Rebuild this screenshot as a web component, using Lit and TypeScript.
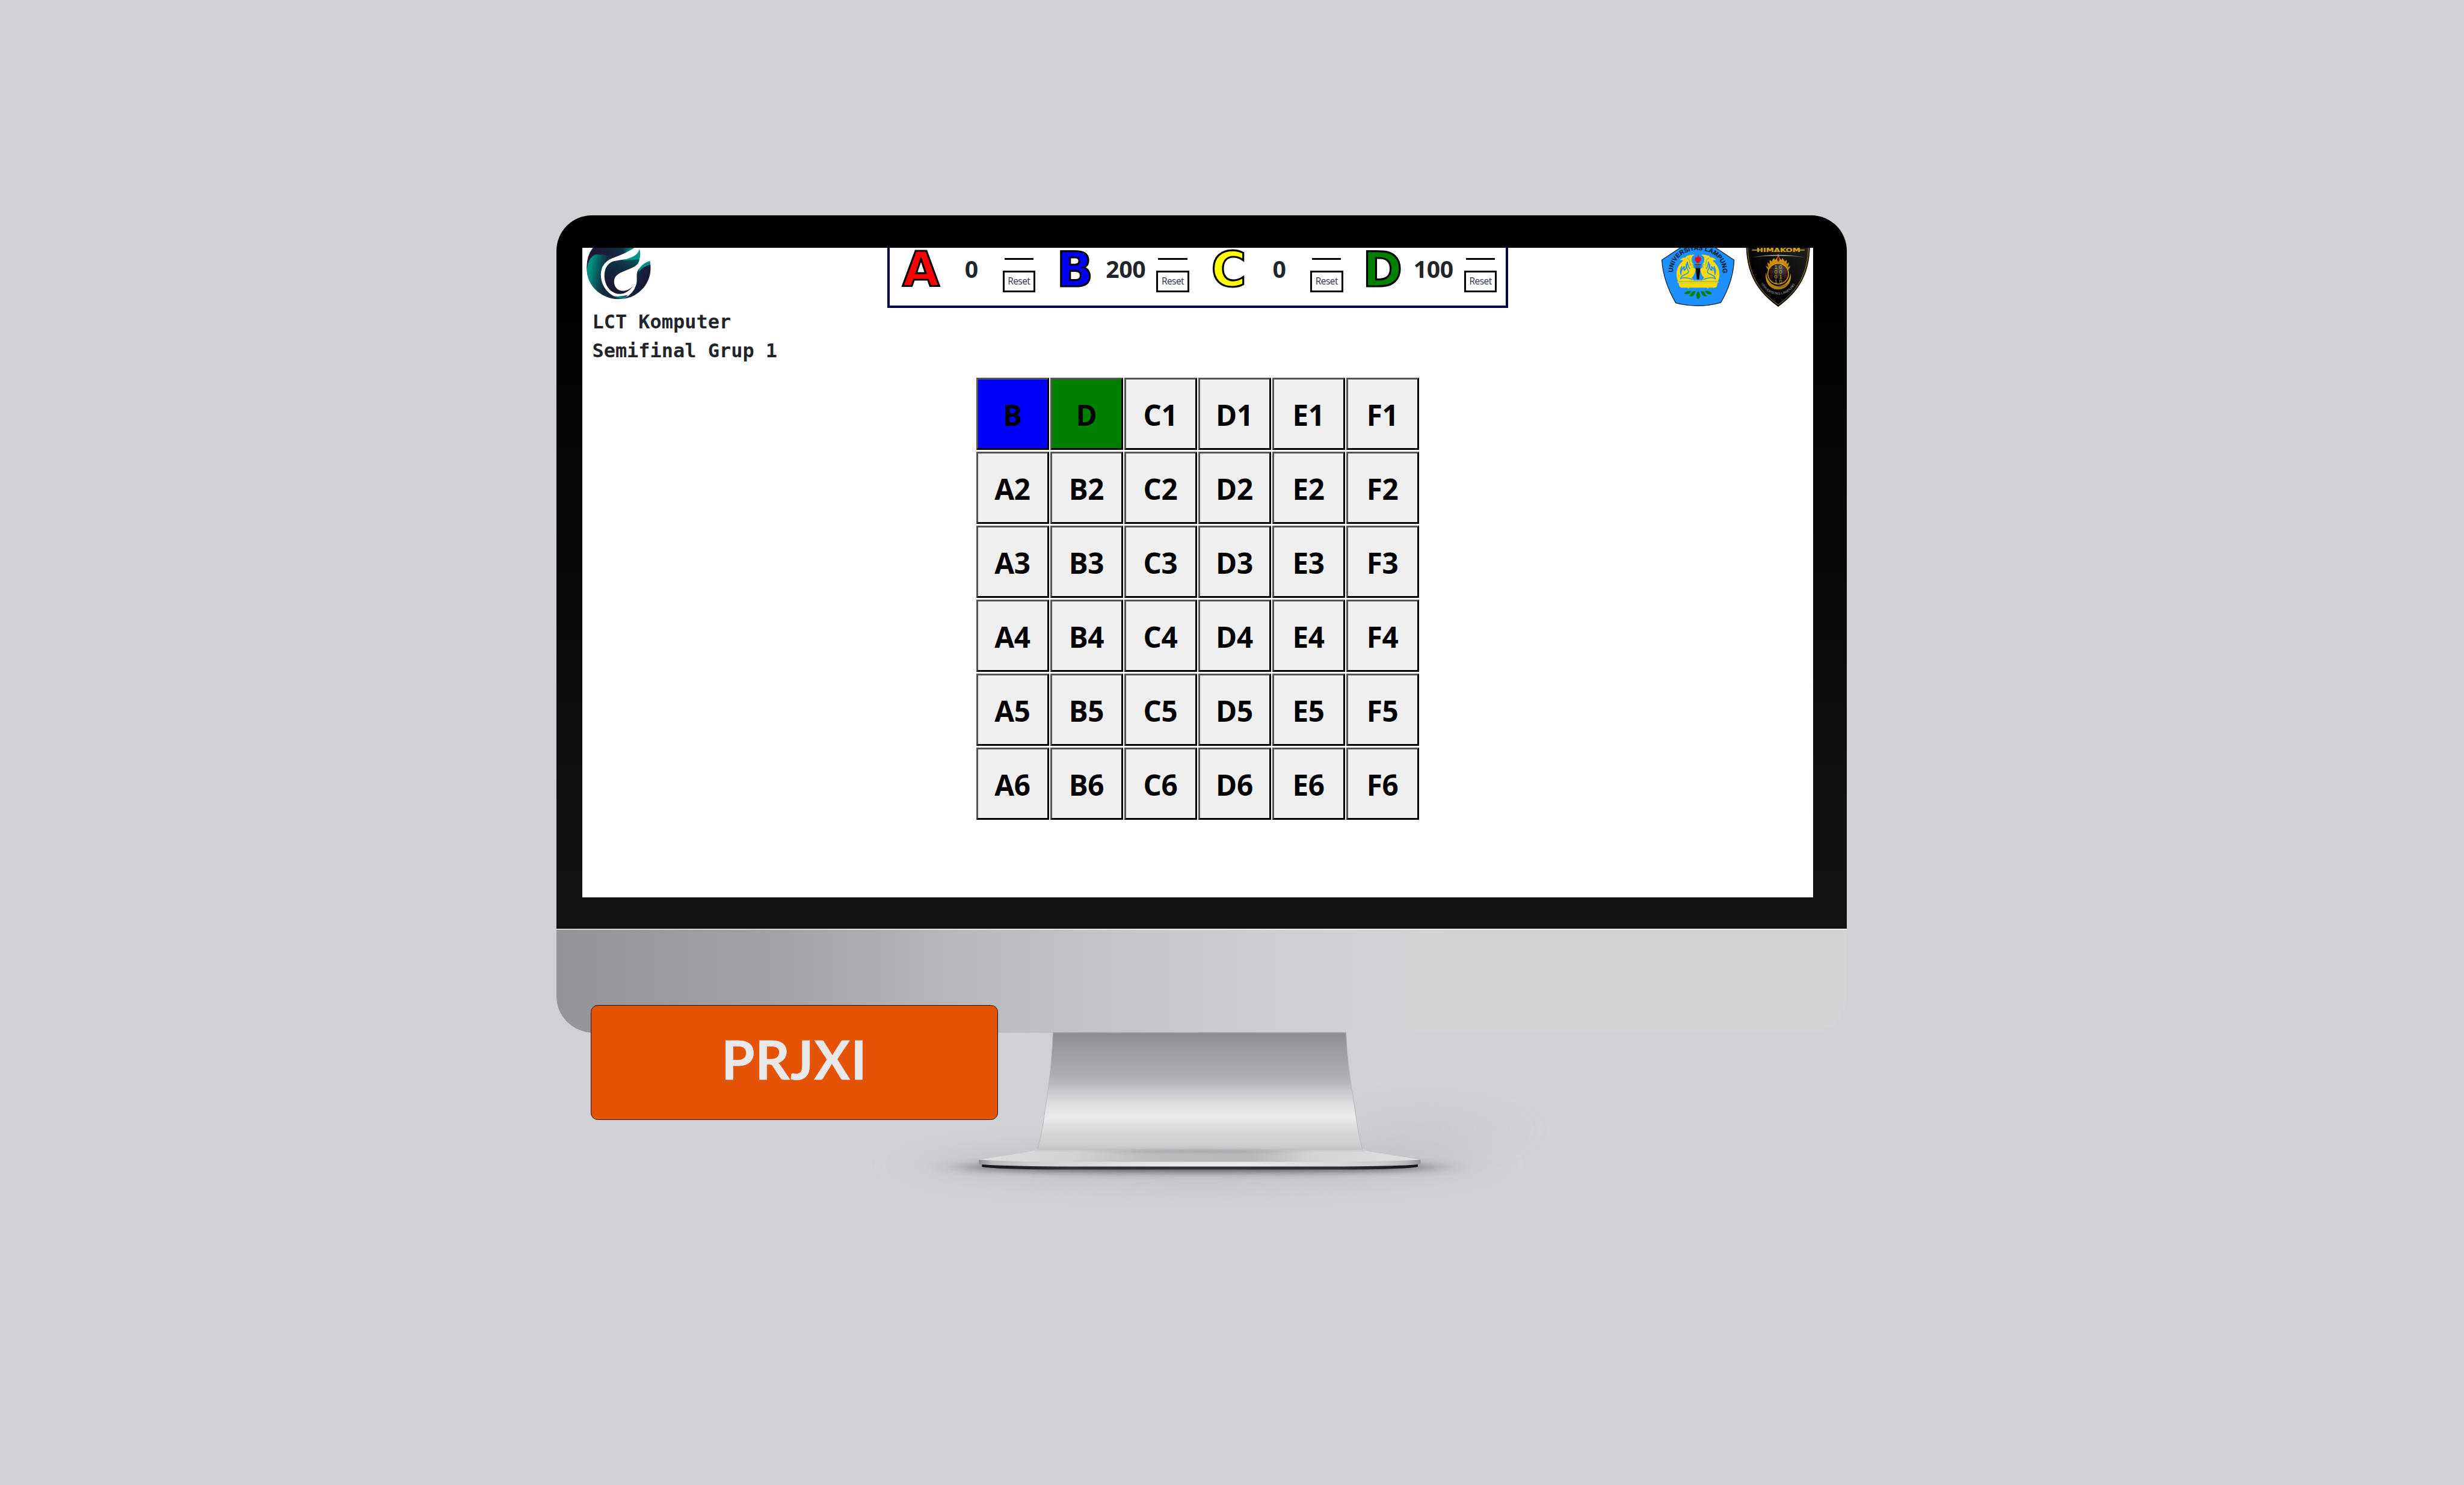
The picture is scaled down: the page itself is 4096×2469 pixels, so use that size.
import { LitElement, html, css, svg, unsafeCSS } from "lit";
import { customElement } from "lit/decorators.js";

/** Converts a design unit (6370-wide artboard) to CSS pixels of the 4096-wide stage. */
const u = (n: number) => unsafeCSS(`${(n * 0.643014).toFixed(3)}px`);

interface Team {
  name: string;
  score: number;
  tone: string;
}

const TEAMS: Team[] = [
  { name: "A", score: 0, tone: "red" },
  { name: "B", score: 200, tone: "blue" },
  { name: "C", score: 0, tone: "yellow" },
  { name: "D", score: 100, tone: "green" },
];

const CLAIMED: Record<string, { label: string; tone: string }> = {
  A1: { label: "B", tone: "blue" },
  B1: { label: "D", tone: "green" },
};

const COLUMNS = ["A", "B", "C", "D", "E", "F"];
const ROWS = [1, 2, 3, 4, 5, 6];

@customElement("lct-logo")
class LctLogo extends LitElement {
  static styles = css`
    :host { display: block; }
    svg { display: block; width: ${u(186.67)}; height: ${u(136.67)}; }
  `;
  render() {
    return html`<svg viewBox="18 31.5 560 410">
      <defs>
        <linearGradient id="a" gradientUnits="userSpaceOnUse" x1="55" y1="0" x2="235" y2="30">
          <stop offset="0" stop-color="#009682" /><stop offset=".32" stop-color="#009080" />
          <stop offset=".7" stop-color="#0a5058" /><stop offset="1" stop-color="#10293f" />
        </linearGradient>
        <linearGradient id="b" gradientUnits="userSpaceOnUse" x1="60" y1="70" x2="400" y2="50">
          <stop offset="0" stop-color="#1e1730" /><stop offset=".45" stop-color="#18203a" />
          <stop offset=".8" stop-color="#122f45" /><stop offset="1" stop-color="#0b8073" />
        </linearGradient>
        <linearGradient id="c" gradientUnits="userSpaceOnUse" x1="420" y1="120" x2="300" y2="380">
          <stop offset="0" stop-color="#0a4f55" /><stop offset=".3" stop-color="#112f45" />
          <stop offset=".6" stop-color="#12243c" /><stop offset="1" stop-color="#1a1830" />
        </linearGradient>
        <linearGradient id="d" gradientUnits="userSpaceOnUse" x1="440" y1="210" x2="540" y2="250">
          <stop offset="0" stop-color="#112d44" /><stop offset=".5" stop-color="#161f38" />
          <stop offset="1" stop-color="#1e1730" />
        </linearGradient>
        <linearGradient id="e" gradientUnits="userSpaceOnUse" x1="260" y1="0" x2="400" y2="0">
          <stop offset="0" stop-color="#0b5f62" /><stop offset=".3" stop-color="#009080" />
          <stop offset="1" stop-color="#10293f" />
        </linearGradient>
      </defs>
      <path fill="url(#b)" d="M105 25 Q50 90 52 190 Q52 215 60 250 L180 170 Q200 130 260 108 Q360 75 428 25Z" />
      <path fill="#08897a" d="M428 25 Q400 52 345 62 Q380 45 400 25Z" />
      <path fill="url(#a)" d="M55 195 Q62 108 120 84 Q180 76 262 107 Q200 130 176 175 C152 230 160 290 190 340 Q220 388 270 410 Q300 424 345 425 Q260 440 190 405 C100 360 50 280 55 195Z" />
      <path fill="url(#c)" d="M460 112 Q464 152 425 176 C370 205 310 218 280 250 C255 282 262 325 288 350 C320 378 375 368 414 324 Q370 388 310 390 C240 388 196 330 190 262 C186 190 215 150 262 135 Q330 120 460 112Z" />
      <path fill="#019581" d="M461 38 Q474 82 461 120 Q400 130 325 128 C390 110 450 96 461 38Z" />
      <path fill="url(#d)" d="M546 160 C556 250 520 330 450 382 Q400 422 330 428 Q390 405 420 355 C450 300 438 280 441 235 C446 185 490 165 546 160Z" />
      <path fill="#07907f" d="M544 133 L546 161 Q490 176 452 222 Q460 160 544 133Z" />
      <path fill="url(#e)" d="M262 406 Q310 412 370 398 Q360 420 318 427 Q285 420 262 406Z" />
    </svg>`;
  }
}

@customElement("unila-emblem")
class UnilaEmblem extends LitElement {
  static styles = css`
    :host { display: block; }
    svg { display: block; width: ${u(196.67)}; height: ${u(156.67)}; }
    .ring {
      font: 700 49px "Liberation Sans", Arial, sans-serif;
      fill: #0b1d2c;
      stroke: #0b1d2c;
      stroke-width: 1.2px;
    }
  `;
  render() {
    const half = svg`
      <path fill="#ffdc00" d="M306 86 Q274 84 246 94 Q238 100 236 106 Q206 106 190 128 Q208 122 218 132 Q166 172 165 238 Q166 270 178 292 H332 V282 H300 L284 262 Q306 246 310 214 Q322 196 300 186 L296 172 L298 158 Q282 146 284 132 Q276 100 306 86Z" />
      <path fill="none" stroke="#1e90ff" stroke-width="7" d="M292 278 Q250 262 222 264 Q204 266 197 272 Q196 252 246 232 Q264 224 256 206 Q238 184 250 138 Q254 176 270 196" />
      <path fill="none" stroke="#1e90ff" stroke-width="9" d="M240 156 Q246 196 226 206 Q220 194 228 176 Q202 196 200 232 Q190 212 208 174" />
      <path fill="none" stroke="#1e90ff" stroke-width="4" d="M246 110 Q270 120 268 142 Q266 156 276 168" />
      <path fill="none" stroke="#1e90ff" stroke-width="3" d="M282 160 H300 M284 172 H302 M286 184 H304" />`;
    return html`<svg viewBox="40 31.5 590 470">
      <path d="M332 -60 L612 126 Q606 290 509 457 Q332 505 160 459 Q62 290 52 126Z" fill="#1e90ff" stroke="#10202e" stroke-width="6" />
      <path id="arc" fill="none" d="M139 222 C134 120 222 49 332 49 S530 120 525 224" />
      <text class="ring"><textPath href="#arc" textLength="590" lengthAdjust="spacingAndGlyphs">UNIVERSITAS LAMPUNG</textPath></text>
      ${half}
      <g transform="matrix(-1 0 0 1 664 0)">${half}</g>
      <path fill="#ffdc00" d="M174 290 H490 L492 302 H172Z" />
      <path fill="none" stroke="#5a9fb0" stroke-width="4" d="M176 297 Q182 292 200 292 H464 Q482 292 488 297" />
      <path fill="none" stroke="#5a9fb0" stroke-width="3" d="M288 272 L300 284 H364 L376 272" />
      <path fill="#ffdc00" d="M180 303 H486 L476 334 Q470 341 458 341 H414 L409 351 L403 341 H264 L259 351 L252 341 H208 Q196 341 190 334Z" />
      <path fill="#f00" d="M334 82 Q338 100 344 108 L350 98 Q358 118 354 130 Q346 146 332 152 Q314 144 309 130 Q306 116 314 100 L322 110 Q332 100 334 82Z" />
      <path fill="#3a5048" d="M308 157 H356 V166 H308Z M312 170 H352 V176 H312Z M314 180 H350 V185 H314Z" />
      <path fill="#000" d="M314 189 H350 L341 276 H324Z" />
      <path fill="#008000" d="M334 366 Q366 402 334 433 Q302 402 334 366Z M280 365 Q238 364 226 386 Q242 396 262 388 Q276 382 280 365Z M314 367 Q284 366 278 386 Q276 398 262 406 Q288 412 298 400 Q310 388 314 367Z M386 365 Q428 364 440 388 Q424 396 404 388 Q390 382 386 365Z M354 367 Q382 366 388 386 Q390 398 404 406 Q380 412 370 400 Q358 388 354 367Z" />
    </svg>`;
  }
}

@customElement("himakom-emblem")
class HimakomEmblem extends LitElement {
  static styles = css`
    :host { display: block; }
    svg { display: block; width: ${u(177)}; height: ${u(156.67)}; }
    .name { font: 700 40px "DejaVu Sans", Verdana, sans-serif; fill: #d6a514; stroke: #d6a514; stroke-width: 1px; }
    .bit { font: 400 43px "Liberation Sans", Arial, sans-serif; text-anchor: middle; }
    .gold { fill: #d2a62a; }
    .red { fill: #9c1422; }
    .ring { font: 400 25px "Liberation Sans", Arial, sans-serif; fill: #b0b0b0; }
  `;
  render() {
    const bits = ["1100", "0000", "0010", "1100"];
    return html`<svg viewBox="690 31.5 531 470">
      <defs>
        <linearGradient id="bg" x1="0" y1="1" x2="1" y2="0">
          <stop offset=".35" stop-color="#000" /><stop offset="1" stop-color="#222" />
        </linearGradient>
        <linearGradient id="gd" x1="0" y1="0" x2="0" y2="1">
          <stop offset="0" stop-color="#e8b014" /><stop offset="1" stop-color="#a87408" />
        </linearGradient>
        <radialGradient id="ball" cx=".6" cy=".25" r=".6">
          <stop offset="0" stop-color="#555" /><stop offset="1" stop-color="#000" />
        </radialGradient>
        <linearGradient id="sh" x1="0" x2="1"><stop offset="0" stop-color="#444" /><stop offset=".5" stop-color="#bbb" /><stop offset="1" stop-color="#555" /></linearGradient>
        <clipPath id="cc"><circle cx="951" cy="233" r="76" /></clipPath>
      </defs>
      <path fill="url(#bg)" stroke="#151515" stroke-width="4" d="M704 20 C710 240 790 370 951 487 C1110 370 1190 240 1196 20Z" />
      <path fill="none" stroke="#b58c1a" stroke-width="4.5" d="M714 20 C720 236 796 362 951 473 C1104 362 1180 236 1186 20" />
      <path stroke="#d6a514" stroke-width="7" d="M748 49 H790 M1116 49 H1156" />
      <text class="name" x="783" y="66" textLength="340" lengthAdjust="spacingAndGlyphs">HIMAKOM</text>
      <path fill="url(#sh)" d="M736 106 Q950 66 1168 106 Q950 80 736 106Z" />
      <path fill="url(#gd)" d="M952 76 Q958 112 976 126 Q984 118 982 110 Q996 124 1000 138 Q1012 134 1014 124 Q1022 142 1016 156 Q1030 152 1034 142 Q1034 164 1026 178 Q1038 180 1046 172 Q1040 200 1024 206 H878 Q862 196 856 172 Q868 180 876 178 Q866 160 868 142 Q874 152 886 156 Q882 138 886 124 Q892 134 902 138 Q906 122 920 110 Q920 120 928 126 Q946 110 952 76Z" />
      <path fill="#8c0c0c" d="M952 96 Q972 126 952 140 Q932 126 952 96Z" />
      <path fill="url(#gd)" d="M858 222 C840 300 890 356 950 356 C1020 354 1062 290 1046 230 C1040 300 990 330 950 328 C900 326 864 290 858 222Z" />
      <circle cx="951" cy="233" r="80" fill="url(#ball)" stroke="#d9a012" stroke-width="7" />
      <path d="M860 250 Q880 320 960 334 Q1000 336 1026 310" fill="none" stroke="#3a2600" stroke-width="3" />
      <g clip-path="url(#cc)">
        ${bits.map((row, r) => [...row].map((d, c) => svg`<text class="bit ${c === 0 || c === 3 ? "red" : "gold"}" x=${895 + c * 37.5} y=${193 + r * 38}>${d}</text>`))}
      </g>
      <path id="low" fill="none" d="M821 309 A143 143 0 0 0 1083 309" />
      <text class="ring"><textPath href="#low" textLength="326" lengthAdjust="spacingAndGlyphs">UNIVERSITAS LAMPUNG</textPath></text>
    </svg>`;
  }
}

@customElement("score-board")
class ScoreBoard extends LitElement {
  static styles = css`
    :host { display: block; }
    .box {
      box-sizing: border-box;
      display: grid;
      grid-template-columns: repeat(4, 1fr);
      width: ${u(1603.8)};
      height: ${u(156.2)};
      border: ${u(6.5)} solid #00004e;
      border-top: 0;
      border-bottom-width: ${u(7)};
    }
    .team {
      display: grid;
      grid-template-columns: ${u(160)} ${u(101)} ${u(84.5)};
      color: #212529;
    }
    .letter {
      font: 700 ${u(123.5)}/${u(116)} "DejaVu Sans", Verdana, sans-serif;
      text-align: center;
      -webkit-text-stroke: ${u(5)} #000;
    }
    .red { color: #f00; }
    .blue { color: #00f; }
    .yellow { color: #ff0; }
    .green { color: #008000; }
    .score {
      font: 700 ${u(61)}/${u(84)} "Open Sans", "Noto Sans", sans-serif;
      letter-spacing: ${u(-0.6)};
      text-align: center;
      margin-top: ${u(13)};
    }
    .controls { display: flex; flex-direction: column; align-items: center; margin-left: ${u(30)}; margin-right: ${u(-30)}; }
    .bar { width: ${u(75)}; height: ${u(5)}; background: #000; margin-top: ${u(26.7)}; }
    .reset {
      box-sizing: border-box;
      width: ${u(84.5)};
      height: ${u(55)};
      margin-top: ${u(28)};
      padding: 0;
      border: ${u(5)} solid #000;
      border-radius: 0;
      background: #fff;
      color: #2b2f45;
      font: 400 ${u(24)}/${u(47)} "Open Sans", "Noto Sans", sans-serif;
      letter-spacing: ${u(-0.8)};
    }
  `;
  render() {
    return html`<div class="box">
      ${TEAMS.map(
        (t) => html`<div class="team">
          <div class="letter ${t.tone}">${t.name}</div>
          <div class="score">${t.score}</div>
          <div class="controls">
            <div class="bar"></div>
            <button class="reset">Reset</button>
          </div>
        </div>`
      )}
    </div>`;
  }
}

@customElement("question-grid")
class QuestionGrid extends LitElement {
  static styles = css`
    :host { display: block; }
    .grid {
      display: grid;
      grid-template-columns: repeat(6, 1fr);
      grid-template-rows: repeat(6, 1fr);
      gap: ${u(4.4)};
      width: ${u(1143.4)};
      height: ${u(1143.4)};
    }
    .cell {
      box-sizing: border-box;
      min-width: 0;
      padding: ${u(6)} ${u(1.5)} 0 0;
      border: ${u(5)} solid;
      border-color: #545554 #000 #000 #545554;
      border-radius: 0;
      background: #efefef;
      color: #000;
      font: 700 ${u(74)}/1 "Open Sans", "Noto Sans", sans-serif;
      letter-spacing: ${u(-0.5)};
    }
    .blue { background: #00f; }
    .green { background: #008000; }
  `;
  render() {
    return html`<div class="grid">
      ${ROWS.map((r) =>
        COLUMNS.map((c) => {
          const hit = CLAIMED[`${c}${r}`];
          return html`<button class="cell ${hit?.tone ?? ""}">${hit?.label ?? `${c}${r}`}</button>`;
        })
      )}
    </div>`;
  }
}

@customElement("monitor-stand")
class MonitorStand extends LitElement {
  static styles = css`
    :host { display: block; }
    svg { display: block; width: ${u(1730)}; height: ${u(480)}; overflow: visible; }
  `;
  render() {
    return html`<svg viewBox="2240 2670 1730 480">
      <defs>
        <linearGradient id="neck" gradientUnits="userSpaceOnUse" x1="0" y1="2670" x2="0" y2="2976">
          <stop offset="0" stop-color="#8a8b8f" /><stop offset=".09" stop-color="#97989c" />
          <stop offset=".24" stop-color="#a2a3a7" /><stop offset=".36" stop-color="#adaeb2" />
          <stop offset=".425" stop-color="#b7b8ba" /><stop offset=".49" stop-color="#c6c7c9" />
          <stop offset=".545" stop-color="#d0d1d5" /><stop offset=".59" stop-color="#dbdcdd" />
          <stop offset=".66" stop-color="#e5e6e8" /><stop offset=".715" stop-color="#e9eaec" />
          <stop offset=".75" stop-color="#e4e5e7" /><stop offset=".79" stop-color="#dcddde" />
          <stop offset=".85" stop-color="#d4d5d6" /><stop offset=".95" stop-color="#cccdce" />
          <stop offset="1" stop-color="#c3c4c7" />
        </linearGradient>
        <linearGradient id="top" x1="0" x2="1">
          <stop offset="0" stop-color="#dedfe0" /><stop offset=".2" stop-color="#d2d3d4" />
          <stop offset=".38" stop-color="#bcbdbf" /><stop offset=".62" stop-color="#b9b9bc" />
          <stop offset=".76" stop-color="#d3d4d6" /><stop offset="1" stop-color="#dedfe0" />
        </linearGradient>
        <linearGradient id="lip" x1="0" x2="1">
          <stop offset="0" stop-color="#8f9092" /><stop offset=".03" stop-color="#b8b9bb" />
          <stop offset=".12" stop-color="#cfd0d1" /><stop offset=".45" stop-color="#e9eaeb" />
          <stop offset=".6" stop-color="#e9eaeb" /><stop offset=".9" stop-color="#cfd0d1" />
          <stop offset=".97" stop-color="#b8b9bb" /><stop offset="1" stop-color="#8f9092" />
        </linearGradient>
        <linearGradient id="foot" x1="0" x2="1">
          <stop offset="0" stop-color="#151617" /><stop offset=".2" stop-color="#303132" />
          <stop offset=".8" stop-color="#303132" /><stop offset="1" stop-color="#151617" />
        </linearGradient>
        <filter id="soft" x="-30%" y="-200%" width="160%" height="500%"><feGaussianBlur stdDeviation="50 9" /></filter>
        <filter id="wide" x="-40%" y="-150%" width="180%" height="400%"><feGaussianBlur stdDeviation="80 32" /></filter>
        <filter id="inner" x="-30%" y="-100%" width="160%" height="300%"><feGaussianBlur stdDeviation="60 3" /></filter>
      </defs>
      <ellipse cx="3100" cy="3010" rx="720" ry="62" fill="#a0a1a6" opacity=".24" filter="url(#wide)" />
      <ellipse cx="3680" cy="2920" rx="200" ry="70" fill="#a0a1a6" opacity=".1" filter="url(#wide)" />
      <ellipse cx="3102" cy="3018" rx="620" ry="13" fill="#3c3d42" opacity=".75" filter="url(#soft)" />
      <path fill="url(#foot)" d="M2539 3010 H3666 V3017 Q3640 3023 3480 3024 H2725 Q2570 3023 2539 3017Z" />
      <path fill="url(#lip)" d="M2531 2998 H3673 V3010 Q3640 3015 3460 3016 H2745 Q2570 3015 2531 3010Z" />
      <path fill="url(#top)" d="M2682 2970 Q2676 2976 2640 2982 L2531 2998 Q2570 3002 2745 3004 H3460 Q3630 3002 3673 2998 L3568 2982 Q3530 2977 3523 2970Z" />
      <path fill="url(#neck)" stroke="#b4b5b8" stroke-width="1.5" d="M2722.5 2670 C2720 2760 2708 2830 2698 2900 Q2692 2940 2682 2972 H3523 Q3514 2940 3508 2900 C3497 2820 3484 2760 3480.5 2670Z" />
      <path fill="#c6c7c9" d="M2686 2966 H3519 L3530 2977 H2674Z" opacity=".6" />
      <ellipse cx="3102" cy="2976" rx="210" ry="5" fill="#a9a9ad" opacity=".9" filter="url(#inner)" />
      <path fill="#9fa0a4" d="M2722.5 2669 H3480.5 V2671.5 H2722.5Z" />
    </svg>`;
  }
}

@customElement("app-root")
export class AppRoot extends LitElement {
  static styles = css`
    :host {
      display: block;
      width: 4096px;
      height: 2469px;
      overflow: hidden;
      background: #d0d1d5;
    }
    .stage {
      position: relative;
      display: flex;
      flex-direction: column;
      align-items: flex-start;
      box-sizing: border-box;
      padding: ${u(556.7)} 0 0 ${u(1439)};
    }
    .bezel {
      box-sizing: border-box;
      width: ${u(3335.7)};
      height: ${u(1844)};
      padding: ${u(83.8)} ${u(88)} 0 ${u(67)};
      border-radius: ${u(92)} ${u(92)} 0 0;
      background: linear-gradient(#000 8%, #111 84%, #121212);
      border-bottom: ${u(3)} solid #070506;
    }
    .screen {
      box-sizing: border-box;
      width: ${u(3180.7)};
      height: ${u(1680.2)};
      background: #fff;
      overflow: hidden;
    }
    .header {
      display: grid;
      grid-template-columns: ${u(788.6)} ${u(1603.8)} 1fr;
      height: ${u(154.5)};
    }
    .emblems { display: flex; justify-content: flex-end; gap: ${u(20)}; }
    .titles {
      padding-left: ${u(25)};
      color: #212529;
      font: 700 ${u(49.7)}/${u(74.7)} "DejaVu Sans Mono", monospace;
      white-space: pre;
    }
    .play { padding: ${u(32.6)} 0 0 ${u(1018.6)}; }
    .chin {
      box-sizing: border-box;
      width: ${u(3335.7)};
      height: ${u(269)};
      border-radius: 0 0 ${u(95)} ${u(95)};
      background:
        linear-gradient(rgba(255, 255, 255, 0.6), rgba(255, 255, 255, 0.6)) top / 100% ${u(3)} no-repeat,
        linear-gradient(90deg, #939498, #a0a1a5 15.5%, #a7a8ac 21%, #b9babd 32%, #c6c7ca 45.5%, #cdced2 54.5%, #d0d1d4 63%, #d2d3d5 71%, #d2d3d5);
    }
    monitor-stand { margin-left: ${u(801)}; }
    .badge {
      position: absolute;
      left: ${u(1527)};
      top: ${u(2598)};
      box-sizing: border-box;
      width: ${u(1053)};
      height: ${u(297)};
      display: flex;
      align-items: center;
      justify-content: center;
      padding-bottom: ${u(16)};
      border: 1px solid #2a1206;
      border-radius: ${u(18)};
      background: #e35205;
      color: #e8e8e8;
      font: 700 ${u(139)}/1 Lato, "Open Sans", sans-serif;
      letter-spacing: ${u(1.5)};
      -webkit-text-stroke: ${u(1)} #e8e8e8;
    }
  `;
  render() {
    return html`<div class="stage">
      <div class="bezel">
        <div class="screen">
          <div class="header">
            <lct-logo></lct-logo>
            <score-board></score-board>
            <div class="emblems">
              <unila-emblem></unila-emblem>
              <himakom-emblem></himakom-emblem>
            </div>
          </div>
          <div class="titles">LCT Komputer<br />Semifinal Grup 1</div>
          <div class="play"><question-grid></question-grid></div>
        </div>
      </div>
      <div class="chin"></div>
      <monitor-stand></monitor-stand>
      <div class="badge">PRJXI</div>
    </div>`;
  }
}
